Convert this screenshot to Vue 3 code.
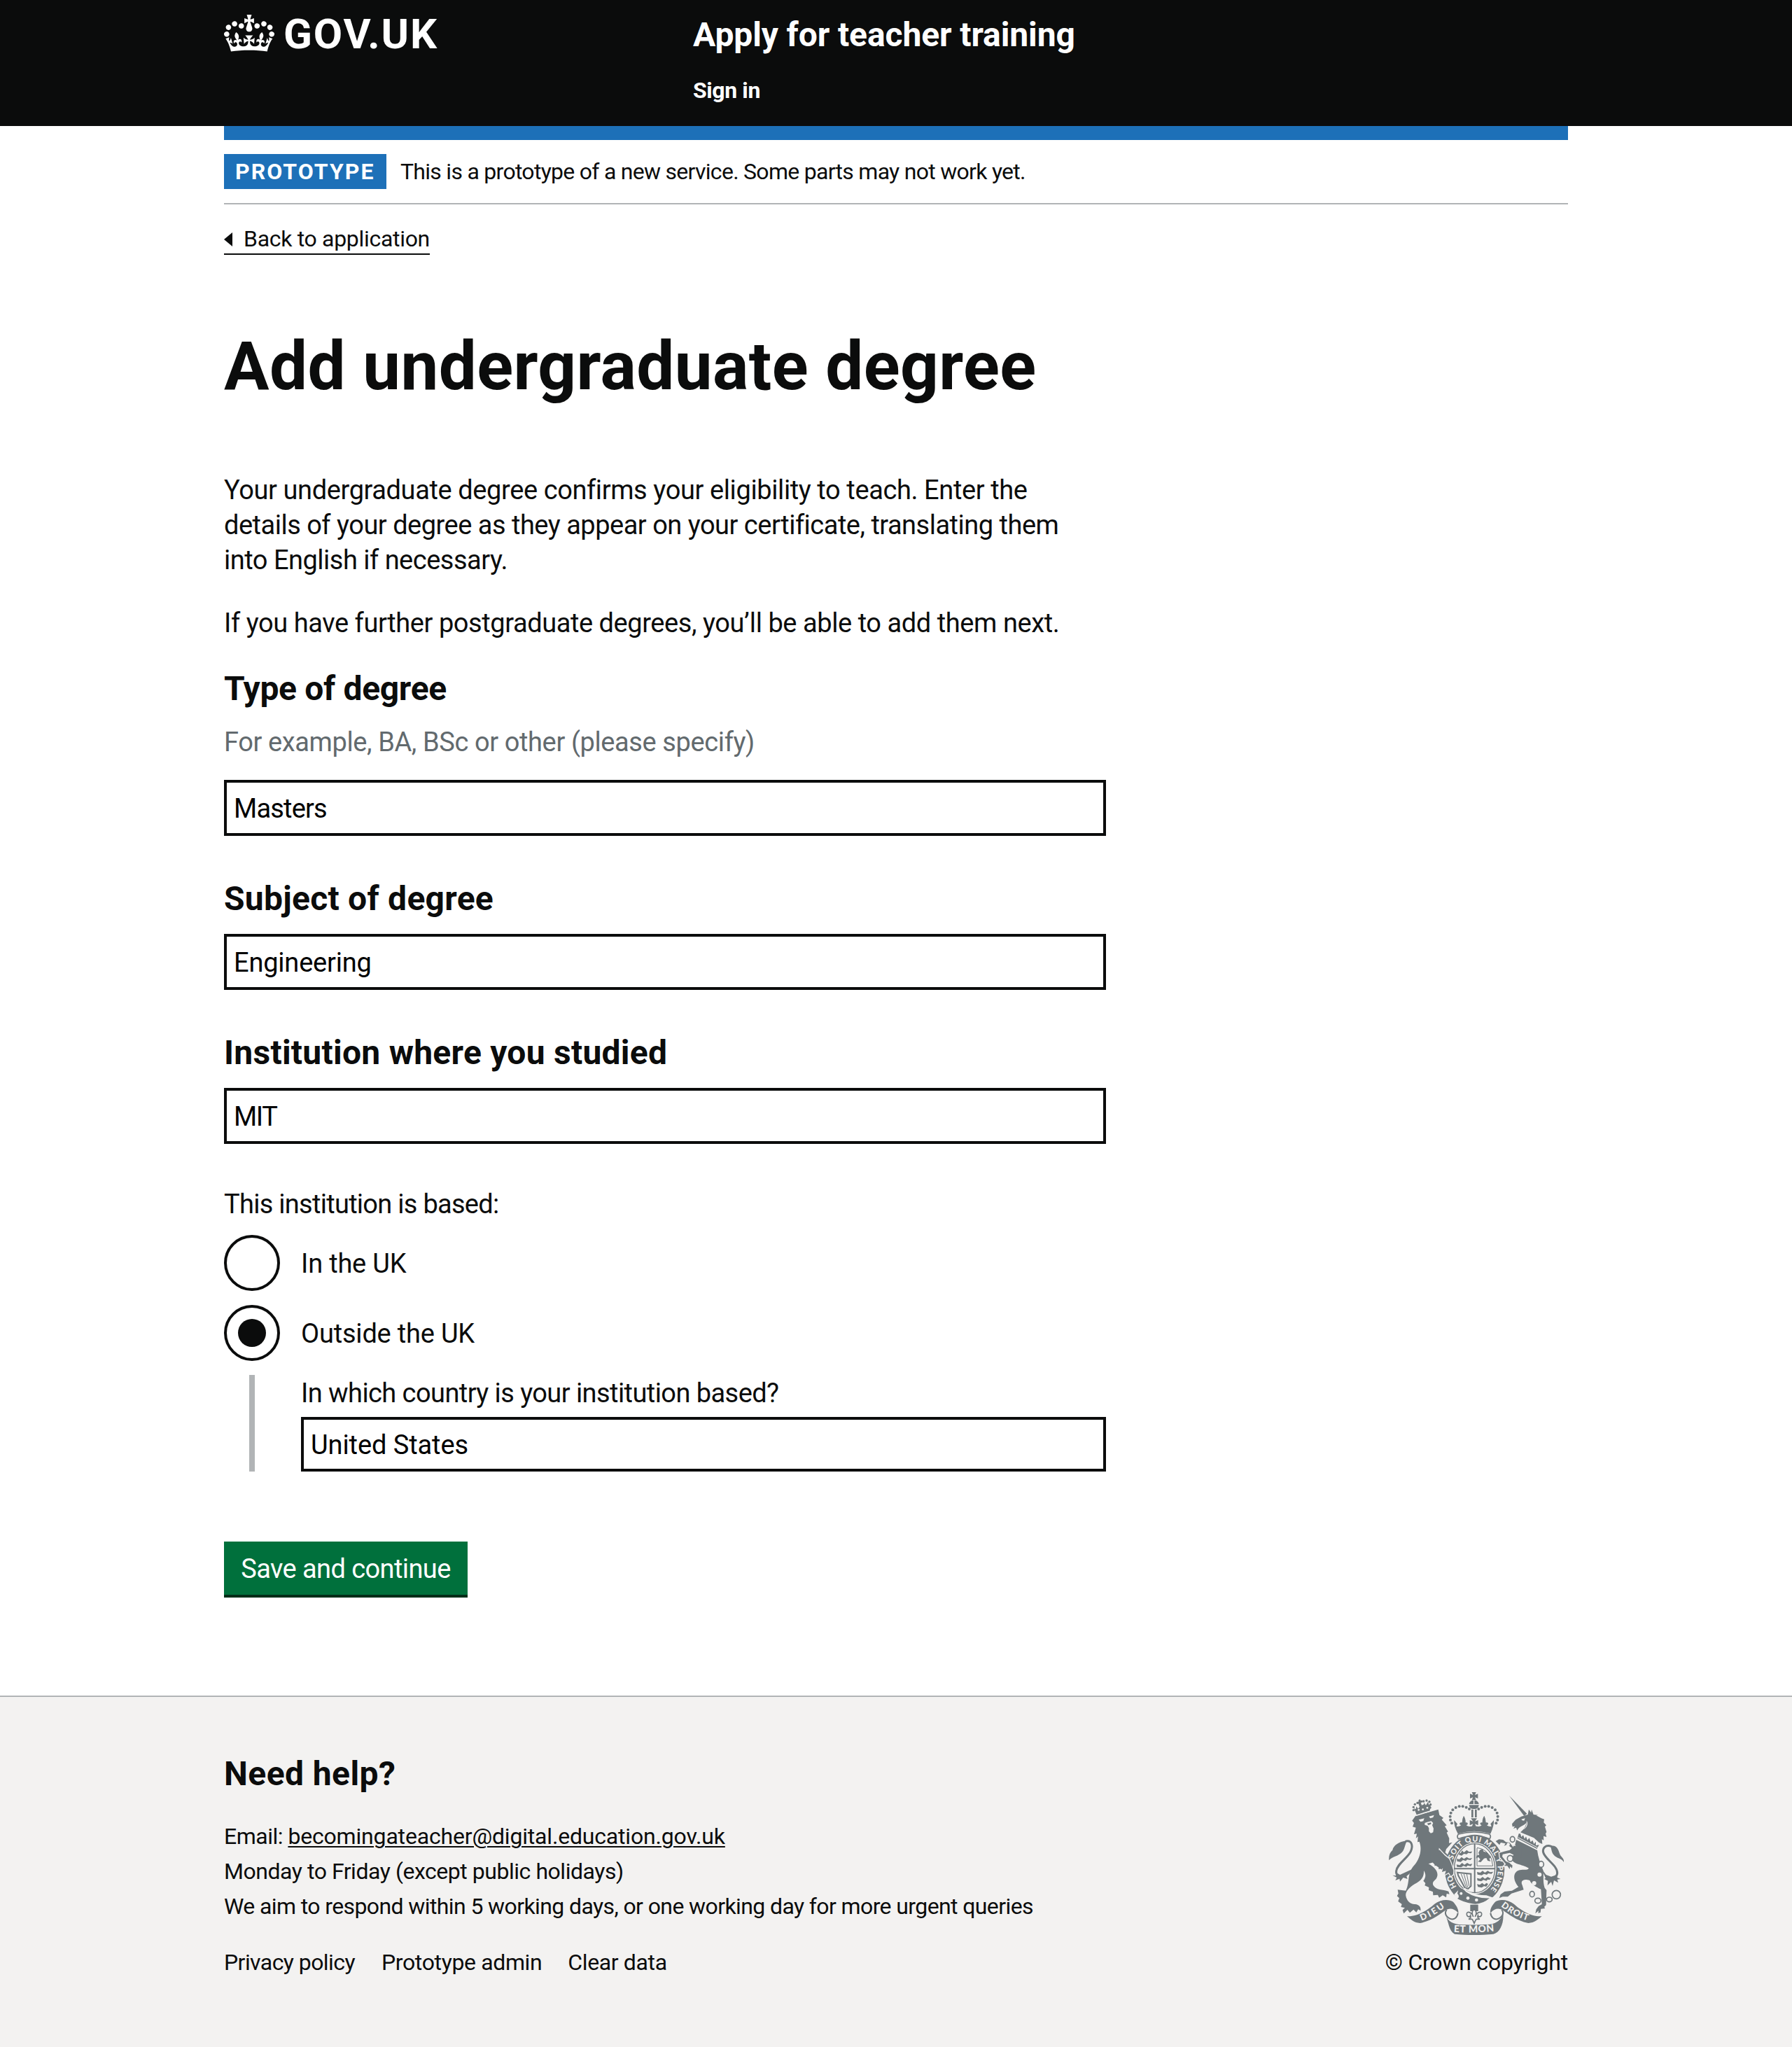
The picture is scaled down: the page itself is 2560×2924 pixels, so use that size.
<script setup>
import { ref } from 'vue'

const degreeType = ref('Masters')
const subject = ref('Engineering')
const institution = ref('MIT')
const location = ref('outside')
const country = ref('United States')

// Pearls on the left arch of the royal crown; the right arch mirrors them.
const pearls = [
  [342, 193], [336, 179], [335, 164], [338, 149], [346, 136], [359, 126], [374, 121], [389, 121], [404, 125], [417, 132]
]
// Rings of the unicorn's chain: centre, radii.
const rings = [
  [602, 262, 10, 12], [592, 344, 12, 13], [725, 369, 11, 13], [686, 497, 10, 12],
  [711, 525, 13, 11], [760, 520, 12, 10], [790, 499, 18, 18]
]
</script>

<template>
  <div class="page">
    <header class="header">
      <div class="container header-row">
        <a class="logo">
          <svg class="logo-crown" viewBox="0 0 132 97" width="72" height="53" aria-hidden="true">
            <path fill="#fff" fill-rule="evenodd" d="M25 30.2c3.5 1.5 7.7-.2 9.1-3.7 1.5-3.6-.2-7.8-3.9-9.2-3.6-1.4-7.6.3-9.1 3.9-1.4 3.5.3 7.5 3.9 9zM9 39.5c3.6 1.5 7.8-.2 9.2-3.7 1.5-3.6-.2-7.8-3.9-9.1-3.6-1.5-7.6.2-9.1 3.8-1.4 3.5.3 7.5 3.8 9zM4.4 57.2c3.5 1.5 7.7-.2 9.1-3.8 1.5-3.6-.2-7.7-3.9-9.1-3.5-1.5-7.6.3-9.1 3.8-1.4 3.5.3 7.6 3.9 9.1zm38.3-21.4c3.5 1.5 7.7-.2 9.1-3.8 1.5-3.6-.2-7.7-3.9-9.1-3.6-1.5-7.6.3-9.1 3.8-1.3 3.6.4 7.7 3.9 9.1zm64.4-5.6c-3.6 1.5-7.8-.2-9.1-3.7-1.5-3.6.2-7.8 3.8-9.2 3.6-1.4 7.7.3 9.2 3.9 1.3 3.5-.4 7.5-3.9 9zm15.9 9.3c-3.6 1.5-7.7-.2-9.1-3.7-1.5-3.6.2-7.8 3.7-9.1 3.6-1.5 7.7.2 9.2 3.8 1.5 3.5-.3 7.5-3.8 9zm4.7 17.7c-3.6 1.5-7.8-.2-9.2-3.8-1.5-3.6.2-7.7 3.9-9.1 3.6-1.5 7.7.3 9.2 3.8 1.3 3.5-.4 7.6-3.9 9.1zM89.3 35.8c-3.6 1.5-7.8-.2-9.2-3.8-1.4-3.6.2-7.7 3.9-9.1 3.6-1.5 7.7.3 9.2 3.8 1.4 3.6-.3 7.7-3.9 9.1zM69.7 17.7l8.9 4.7V9.3l-8.9 2.8c-.2-.3-.5-.6-.9-.9L72.4 0H59.6l3.5 11.2c-.3.3-.6.5-.9.9l-8.8-2.8v13.1l8.8-4.7c.3.3.6.7.9.9l-5 15.4v.1c-.2.8-.4 1.6-.4 2.4 0 4.1 3.1 7.5 7 8.1h.2c.3 0 .7.1 1 .1.4 0 .7 0 1-.1h.2c4-.6 7.1-4.1 7.1-8.1 0-.8-.1-1.7-.4-2.4V34l-5.1-15.4c.4-.2.7-.6 1-.9zM66 92.8c16.9 0 32.8 1.1 47.1 3.2 4-16.9 8.9-26.7 14-33.5l-9.6-3.4c1 4.9 1.1 7.2 0 10.2-1.5-1.4-3-4.3-4.2-8.7L108.6 76c2.8-2 5-3.2 7.5-3.3-4.4 9.4-10 11.9-13.6 11.2-4.3-.8-6.3-4.6-5.6-7.9 1-4.7 5.7-5.9 8-.5 4.3-8.7-3-11.4-7.6-8.8 7.1-7.2 7.9-13.5 2.1-21.1-8 6.1-8.1 12.3-4.5 20.8-4.7-5.4-12.1-2.5-9.5 6.2 3.4-5.2 7.9-2 7.2 3.1-.6 4.3-6.4 7.8-13.5 7.2-10.3-.9-10.9-8-11.2-13.8 2.5-.5 7.1 1.8 11 7.3L80.2 60c-4.1 4.4-8 5.3-12.3 5.4 1.4-4.4 8-11.6 8-11.6H55.5s6.4 7.2 7.9 11.6c-4.2-.1-8-1-12.3-5.4l1.4 16.4c3.9-5.5 8.5-7.7 10.9-7.3-.3 5.8-.9 12.8-11.1 13.8-7.2.6-12.9-2.9-13.5-7.2-.7-5 3.8-8.3 7.1-3.1 2.7-8.7-4.6-11.6-9.4-6.2 3.7-8.5 3.6-14.7-4.6-20.8-5.8 7.6-5 13.9 2.2 21.1-4.7-2.6-11.9.1-7.7 8.8 2.3-5.5 7.1-4.2 8.1.5.7 3.3-1.3 7.1-5.7 7.9-3.5.7-9-1.8-13.5-11.2 2.5.1 4.7 1.3 7.5 3.3l-4.7-15.4c-1.2 4.4-2.7 7.2-4.3 8.7-1.1-3-.9-5.3 0-10.2l-9.5 3.4c5 6.9 9.9 16.7 14 33.5 14.8-2.1 30.8-3.2 47.7-3.2z" />
          </svg>
          <span class="logo-text">GOV.UK</span>
        </a>
        <div class="header-content">
          <div class="service-name">Apply for teacher training</div>
          <nav class="header-nav">Sign in</nav>
        </div>
      </div>
    </header>

    <div class="container body">
      <div class="blue-bar"></div>
      <div class="phase">
        <strong class="tag">PROTOTYPE</strong>
        <span class="phase-text">This is a prototype of a new service. Some parts may not work yet.</span>
      </div>
      <a class="back">
        <svg width="12" height="20" viewBox="0 0 12 20" aria-hidden="true"><path d="M0 10 12 0v20z" fill="#0b0c0c" /></svg>
        <span>Back to application</span>
      </a>

      <main class="main">
        <h1 class="title">Add undergraduate degree</h1>
        <p class="para intro">
          <span class="intro-a">Your undergraduate degree confirms your eligibility to teach. Enter the</span><br>
          <span>details of your degree as they appear on your certificate, translating them</span><br>
          <span>into English if necessary.</span>
        </p>
        <p class="para further">If you have further postgraduate degrees, you’ll be able to add them next.</p>

        <div class="group">
          <label class="label-l type-label" for="type">Type of degree</label>
          <span class="hint">For example, BA, BSc or other (please specify)</span>
          <input id="type" v-model="degreeType" class="input masters" type="text">
        </div>
        <div class="group">
          <label class="label-l" for="subject">Subject of degree</label>
          <input id="subject" v-model="subject" class="input engineering" type="text">
        </div>
        <div class="group">
          <label class="label-l" for="institution">Institution where you studied</label>
          <input id="institution" v-model="institution" class="input mit" type="text">
        </div>

        <fieldset class="radios">
          <legend class="legend">This institution is based:</legend>
          <label class="radio">
            <input v-model="location" class="radio-input" type="radio" value="uk">
            <span class="radio-text">In the UK</span>
          </label>
          <label class="radio">
            <input v-model="location" class="radio-input" type="radio" value="outside">
            <span class="radio-text">Outside the UK</span>
          </label>
          <div v-if="location === 'outside'" class="conditional">
            <label class="country-label" for="country">In which country is your institution based?</label>
            <input id="country" v-model="country" class="input country" type="text">
          </div>
        </fieldset>

        <button class="button" type="button">Save and continue</button>
      </main>
    </div>

    <footer class="footer">
      <div class="container footer-row">
        <div class="footer-main">
          <h2 class="help">Need help?</h2>
          <ul class="contact">
            <li class="email">Email: <a class="link">becomingateacher@digital.education.gov.uk</a></li>
            <li class="hours">Monday to Friday (except public holidays)</li>
            <li class="respond">We aim to respond within 5 working days, or one working day for more urgent queries</li>
          </ul>
          <ul class="links">
            <li class="privacy">Privacy policy</li>
            <li>Prototype admin</li>
            <li>Clear data</li>
          </ul>
        </div>
        <div class="copyright">
          <svg class="crest" viewBox="72 60 753 612" width="251" height="204" aria-hidden="true">
            <defs>
              <path id="garter" d="M364 467A99 119 0 1 1 499 486" />
              <path id="motto-left" d="M212 611Q268 590 322 546" />
              <path id="motto-mid" d="M350 659Q438 665 528 655" />
              <path id="motto-right" d="M552 549Q604 592 672 612" />
            </defs>

            <!-- lion -->
            <g class="ink">
              <path d="M172 182 188 160 250 144 284 134 289 158 306 170 299 178 320 202 312 206 326 229 320 233 331 258 330 278 344 275 318 304 314 318 334 338 340 370 348 408 336 418 329 404 312 414 317 397 300 402 304 386 286 390 290 372 268 376 272 358 242 367C268 380 286 402 279 422 274 440 256 440 262 458 276 482 302 474 328 485L332 497 320 495 318 511 303 502 288 512 282 500 262 502 261 487 243 480 244 468 226 460 229 450 220 440C232 424 231 410 222 396 224 428 205 442 184 453 158 468 142 488 145 504 148 524 164 541 184 540 206 542 210 556 208 568L198 562 190 575 178 563 162 577 152 564 136 580 131 565 141 556 124 552 128 540 112 528 117 514 107 505 113 494 110 478 145 482C164 444 148 408 182 372 204 346 216 306 203 272L195 274 197 250 188 258 192 238 180 240 188 212 174 208 180 192Z" />
              <path d="M150 268C112 272 92 290 88 308 76 320 71 332 73 352 90 334 112 336 130 316 140 304 140 288 150 268Z" />
              <path d="M172 390 160 410 148 420 152 432 134 426 120 443 118 431 100 438 106 426 88 416 102 418 106 406 120 414Z" />
              <path d="m200 94 5-4 4 6 7-1 0 9-7 0 4 12 10-4-1-8 9 12 9-15 4 14 8-8-4 34-56 18-12-30 8 4 2-12 8 10 6-8-5-14-6 1-1-9 7 1Z" />
            </g>
            <path class="line" d="M146 270C174 266 175 294 166 314 152 344 108 366 104 398 102 414 112 424 132 418" />
            <g class="pearl">
              <circle cx="178" cy="137" r="5" /><circle cx="178" cy="124" r="5" /><circle cx="184" cy="112" r="5" /><circle cx="195" cy="106" r="5" />
              <circle cx="221" cy="99" r="5" /><circle cx="234" cy="96" r="5" /><circle cx="246" cy="101" r="5" /><circle cx="251" cy="113" r="5" /><circle cx="249" cy="126" r="5" />
            </g>
            <g class="bg">
              <path d="M200 178 224 172 220 184 208 187ZM244 164 266 158 262 168 250 172Z" />
              <path d="M226 192 236 188 254 184 262 192 258 202 264 216 262 232 252 236 244 228 244 214 238 204 226 200Z" />
              <path d="M186 158 255 137 256 141 188 163Z" />
              <circle cx="200" cy="136" r="4" /><circle cx="218" cy="134" r="4" /><circle cx="237" cy="127" r="4" />
            </g>
            <path class="ink" d="M236 194 252 190 254 196 242 202Z" />

            <!-- unicorn -->
            <g class="ink">
              <path d="M588 75 664 152 652 162Z" />
              <path d="M600 196 616 178 640 164 668 156 672 134 682 148 684 134 692 156 712 158 704 160 726 172 738 176 736 190 747 202 741 208 748 230 744 238 748 252 735 248 736 266 728 262 730 282 716 276 694 256 636 232C656 216 658 206 662 190 652 206 634 202 622 224L618 212 606 216 612 206 602 208Z" />
              <path d="M618 264 708 308C712 340 722 366 734 396 736 426 732 444 740 470L748 480 746 544 738 552 742 558 724 560 722 576 712 578 714 568 700 580 704 562 714 548 728 540 724 476C702 466 684 456 676 438 646 428 636 442 644 458L650 478 598 494 582 508 560 508 545 514 551 498 568 486 600 482 628 466C606 440 602 408 626 396 650 388 664 398 672 386 640 366 606 372 598 344L606 318Z" />
              <path d="M764 290C796 284 800 312 806 328 812 340 824 344 822 360 812 342 792 346 778 328 768 314 770 302 764 290Z" />
              <path d="M726 388 746 414 768 422 792 414 794 426 808 432 794 434 798 448 780 438 774 462 768 444 752 460 754 440 738 432 744 428Z" />
            </g>
            <path class="line" d="M768 292C744 284 730 300 734 318 742 348 796 374 794 408 792 424 778 430 764 428" />
            <path class="bg" d="M630 234 720 286 706 308 622 262Z" />
            <path class="ink" d="M629 238 636 238 640 252 648 244 654 260 660 250 666 266 674 256 680 274 688 266 694 282 702 272 702 288 716 286 707 303 623 258Z" />
            <path class="thin-bg" d="M626 254 710 298" />
            <path class="bg" d="M640 176 656 172 652 182 644 181ZM662 182C672 192 664 214 648 220 662 208 664 196 662 182Z" />

            <!-- royal crown -->
            <g class="pearl">
              <circle v-for="(p, i) in pearls" :key="'l' + i" :cx="p[0]" :cy="p[1]" r="6" />
              <circle v-for="(p, i) in pearls" :key="'r' + i" :cx="874 - p[0]" :cy="p[1]" r="6" />
            </g>
            <g class="ink">
              <path d="M428 60h18l-5 12 13-5v20l-13-5 5 11h-18l5-11-13 5V67l13 5Z" />
              <path d="M416 111a21 18 0 0 1 19-17v17Zm23-17a21 18 0 0 1 19 17h-19Z" />
              <path d="M416 115h42q-2 16-16 17h-10q-14-1-16-17Z" />
              <path d="M426 134h8v34h-8zm15 0h8v34h-8z" />
              <path d="M424 172h26l-9 13 14-5v22l-14-6 6 13h-20l6-13-14 6v-22l14 5Z" />
              <path d="M352 180 366 196 362 206Q372 210 382 202L376 198Q374 188 386 190 386 174 393 161 402 174 401 190 412 188 410 198L404 202Q414 210 424 206H450Q462 210 470 202L464 198Q462 188 473 190 472 174 481 161 488 174 488 190 500 188 498 198L492 202Q502 210 512 206L508 196 522 180Q524 202 508 238 438 216 368 238 350 204 352 180Z" />
            </g>
            <path class="band" d="M370 240Q438 222 504 240 512 250 504 260 438 236 370 260 362 250 370 240Z" />

            <!-- garter and shield -->
            <ellipse class="ink" cx="440" cy="391" rx="128" ry="149" />
            <ellipse class="bg" cx="440" cy="386" rx="93" ry="111" />
            <ellipse class="shield" cx="440" cy="386" rx="87" ry="105" />
            <path class="line-s" d="M440 282V490M353 388H527" />
            <g class="charge">
              <path d="m376 318 4 4 6-12 8 8 12-10 10 8 14-2-6 8-12-2-6 6-12-2-10 8-12-4ZM364 344l10 4 10-10 10 8 12-8 10 6 14-2-8 9-14-2-6 6-12-4-10 8-16-3ZM362 370l14 3 10-10 10 8 12-8 10 6 12-2-6 10-14-3-6 6-12-4-10 6-18-2Z" />
              <path d="m450 402 14 3 10-8 10 8 12-8 10 6 14-2-8 9-14-2-6 6-12-4-10 6-18-3ZM450 428l14 3 10-8 10 8 12-8 10 6 4-2-6 9-8-2-6 6-12-4-10 6-16-3ZM450 454l12 3 10-8 10 8 8-8 8 4-8 12-10-2-10 6-16-3Z" />
              <path d="m462 308 12-6 4 12 14 4 12 14 4 0 2 10-8 2 6 12-12-2-6-12-10 2-14 16-12-2 10-10-8-10-10 6 2-12 12-4-4-8Z" />
            </g>
            <path class="line-s" d="M366 404 424 410V462L412 474 398 470 370 418Z" />
            <path class="line-s thin" d="M382 410 404 468M394 411 410 468M406 411 416 462" />
            <path class="line-s thin" d="M450 300V376H518M450 298Q490 302 512 345L518 376" />
            <path class="bg" d="M352 498 372 478 400 470 406 482Q450 502 490 502L520 512 500 545 380 545Z" />
            <path class="ink" d="M370 478Q382 466 396 480L404 488Q446 516 504 514 470 544 430 538 392 532 366 516 378 508 366 494Z" />
            <g class="bg"><circle cx="411" cy="514" r="7" /><circle cx="448" cy="522" r="7" /><circle cx="382" cy="494" r="6" /></g>
            <text class="garter-text"><textPath href="#garter" startOffset="2" textLength="54">HO</textPath></text>
            <text class="garter-text"><textPath href="#garter" startOffset="122" textLength="396">SOIT QUI MAL Y PENSE</textPath></text>

            <!-- lion's foreleg over the garter -->
            <path class="paw" d="M290 308Q308 330 330 346 338 360 349 396L348 412 338 420 329 404 312 414 317 397 300 402 304 386 286 390 284 350Z" />
            <path class="ink" d="M250 300 290 308 310 330 300 392 270 372 250 350Z" />

            <!-- unicorn's forelegs over the garter -->
            <path class="paw" d="M614 288 600 300 580 284 566 290 572 280 552 276 546 286 530 270 544 262 562 264 574 274 590 276 606 296 616 308 610 330 590 320 560 326 558 336 574 356 588 362 602 374 600 386 592 378 590 390 580 376 566 376 574 368 548 338 546 320 566 314 590 308Z" />
            <path class="ink" d="M606 290 640 290 640 340 606 336Z" />
            <g class="bg">
              <ellipse cx="592" cy="344" rx="12" ry="13" /><circle cx="718" cy="413" r="9" /><circle cx="695" cy="450" r="9" /><circle cx="584" cy="284" r="7" /><ellipse cx="725" cy="369" rx="11" ry="13" />
            </g>
            <ellipse v-for="(r, i) in rings" :key="i" class="ring" :cx="r[0]" :cy="r[1]" :rx="r[2]" :ry="r[3]" />

            <!-- plinth flower -->
            <path class="ink" d="M421 542h34v28h-34z" />
            <path class="flower" d="M438 560C424 574 430 584 434 594 428 572 404 568 406 584 408 596 420 596 422 588 426 596 420 602 414 604H428C432 606 434 614 438 622 442 614 444 606 448 604H462C456 602 450 596 454 588 456 596 468 596 470 584 472 568 448 572 442 594 446 584 452 574 438 560Z" />

            <!-- motto ribbon -->
            <path class="ink" d="M150 592C200 594 244 560 268 539 292 520 328 516 348 530 362 546 372 562 370 578 352 558 334 556 318 564 290 582 260 610 206 621 180 620 168 606 150 592Z" />
            <path class="ink" d="M728 592C676 594 632 560 608 539 584 520 546 516 528 530 514 546 504 562 508 578 524 558 542 556 558 564 586 582 616 610 670 621 696 620 710 606 728 592Z" />
            <path class="ink" d="M312 580C322 608 340 624 372 627 420 629 460 629 506 626 536 622 552 608 562 580 566 622 548 662 520 668 470 673 404 673 354 668 328 654 330 616 312 580Z" />
            <path class="ribbon-edge" d="M368 578C366 598 352 606 340 604 318 596 308 580 320 564M508 578C510 598 524 606 536 604 558 596 568 580 556 564" />
            <text class="motto side"><textPath href="#motto-left" textLength="116">DIEU</textPath></text>
            <text class="motto"><textPath href="#motto-mid" textLength="174">ET MON</textPath></text>
            <text class="motto side"><textPath href="#motto-right" textLength="130">DROIT</textPath></text>
          </svg>
          <span class="copy-text">© Crown copyright</span>
        </div>
      </div>
    </footer>
  </div>
</template>

<style>
body {
  margin: 0;
  background: #f3f2f1;
}
</style>

<style scoped>
.page {
  display: flex;
  flex-direction: column;
  min-height: 2924px;
  background: #fff;
  color: #0b0c0c;
  font-family: Roboto, "Liberation Sans", sans-serif;
}
.page * { box-sizing: border-box; }
.container {
  width: 1920px;
  margin: 0 auto;
}
h1, h2, p, ul { margin: 0; padding: 0; }
li { list-style: none; }

/* header */
.header {
  height: 180px;
  background: #0b0c0c;
  color: #fff;
}
.header-row { display: flex; padding-top: 20px; }
.logo { display: flex; width: 670px; }
.logo-crown { margin-top: 1px; }
.logo-text {
  margin: -1px 0 0 13px;
  font-size: 60px;
  line-height: 60px;
  font-weight: 700;
  letter-spacing: 1.92px;
}
.header-content { display: flex; flex-direction: column; gap: 29px; }
.service-name {
  font-size: 48px;
  line-height: 60px;
  font-weight: 700;
  letter-spacing: -0.11px;
}
.header-nav {
  font-size: 32px;
  line-height: 40px;
  font-weight: 700;
  letter-spacing: -0.4px;
}

/* phase banner */
.blue-bar { height: 20px; background: #1d70b8; }
.phase {
  display: flex;
  gap: 20px;
  padding: 20px 0;
  border-bottom: 2px solid #b1b4b6;
  font-size: 32px;
  line-height: 50px;
}
.tag {
  width: 232px;
  padding-left: 16px;
  background: #1d70b8;
  color: #fff;
  font-weight: 700;
  letter-spacing: 2.05px;
}
.phase-text { letter-spacing: -0.72px; }
.back {
  display: flex;
  align-items: center;
  gap: 16px;
  width: 294px;
  height: 43px;
  margin-top: 29px;
  border-bottom: 2px solid #0b0c0c;
  font-size: 32px;
  line-height: 41px;
  letter-spacing: -0.31px;
  white-space: nowrap;
}

/* form */
.main {
  display: flex;
  flex-direction: column;
  align-items: flex-start;
  width: 1260px;
  padding-top: 109px;
}
.title {
  font-size: 96px;
  line-height: 100px;
  font-weight: 700;
  letter-spacing: 0.44px;
}
.para {
  font-size: 38px;
  line-height: 50px;
  letter-spacing: -0.5px;
  white-space: nowrap;
}
.intro { margin-top: 102px; }
.intro-a { letter-spacing: -0.395px; }
.further { margin: 40px 0 39px; letter-spacing: -0.43px; }
.group {
  display: flex;
  flex-direction: column;
  width: 100%;
  margin-bottom: 60px;
}
.label-l {
  margin-bottom: 20px;
  font-size: 48px;
  line-height: 60px;
  font-weight: 700;
  letter-spacing: 0.26px;
}
.type-label { letter-spacing: -0.33px; }
.hint {
  margin-bottom: 29px;
  padding-top: 1px;
  color: #626a6e;
  font-size: 38px;
  line-height: 50px;
  letter-spacing: -0.39px;
}
.input {
  width: 100%;
  height: 80px;
  margin: 0;
  padding: 2px 10px 0;
  border: 4px solid #0b0c0c;
  border-radius: 0;
  background: #fff;
  color: #000;
  font-family: inherit;
  font-size: 38px;
  line-height: 50px;
}
.masters { letter-spacing: -0.8px; }
.engineering { letter-spacing: -0.2px; }
.mit { letter-spacing: -1.4px; }
.radios {
  width: 100%;
  min-width: 0;
  margin: 0;
  padding: 0;
  border: 0;
  font-size: 38px;
  line-height: 50px;
}
.legend {
  margin-bottom: 19px;
  padding: 1px 0 0;
  letter-spacing: -0.72px;
}
.radio {
  display: flex;
  align-items: center;
  gap: 30px;
  height: 80px;
  margin-bottom: 20px;
  letter-spacing: -0.2px;
}
.radio-text { padding-top: 2px; }
.radio-input {
  display: grid;
  place-items: center;
  appearance: none;
  width: 80px;
  height: 80px;
  margin: 0;
  border: 4px solid #0b0c0c;
  border-radius: 50%;
}
.radio-input:checked::before {
  content: "";
  width: 40px;
  height: 40px;
  border-radius: 50%;
  background: #0b0c0c;
}
.conditional {
  display: flex;
  flex-direction: column;
  margin-left: 36px;
  padding-left: 66px;
  border-left: 8px solid #b1b4b6;
}
.country-label {
  margin-bottom: 9px;
  padding-top: 1px;
  letter-spacing: -0.57px;
}
.country { height: 78px; padding-top: 1px; letter-spacing: -0.09px; }
.button {
  width: 348px;
  height: 76px;
  margin: 100px 0 0;
  padding: 2px 0 0;
  border: 0;
  background: #00703c;
  box-shadow: 0 4px 0 #002d18;
  color: #fff;
  font-family: inherit;
  font-size: 38px;
  line-height: 50px;
  letter-spacing: -0.585px;
}

/* footer */
.footer {
  flex: 1;
  margin-top: 144px;
  padding-top: 80px;
  border-top: 2px solid #b1b4b6;
  background: #f3f2f1;
  font-size: 32px;
  line-height: 50px;
}
.footer-row { display: flex; justify-content: space-between; }
.help {
  margin-bottom: 34px;
  font-size: 48px;
  line-height: 60px;
  font-weight: 700;
  letter-spacing: 0.42px;
}
.email { letter-spacing: -0.5px; }
.link {
  letter-spacing: -0.18px;
  text-decoration: underline;
  text-decoration-thickness: 2px;
  text-underline-offset: 3px;
}
.hours { letter-spacing: -0.46px; }
.respond { letter-spacing: -0.606px; }
.links {
  display: flex;
  gap: 37px;
  margin-top: 30px;
  letter-spacing: -0.37px;
}
.privacy { margin-right: 1px; letter-spacing: -0.57px; }
.copyright {
  display: flex;
  flex-direction: column;
  align-items: flex-end;
  padding-top: 56px;
}
.crest { margin: 0 5px 14px 0; }
.copy-text { letter-spacing: -0.22px; }

/* coat of arms */
.ink, .pearl, .charge { fill: #6f777b; }
.bg { fill: #f3f2f1; }
.line { fill: none; stroke: #6f777b; stroke-width: 9; stroke-linecap: round; }
.line-s { fill: none; stroke: #6f777b; stroke-width: 6; }
.thin { stroke-width: 3; }
.thin-bg { fill: none; stroke: #f3f2f1; stroke-width: 3; }
.paw { fill: #6f777b; stroke: #f3f2f1; stroke-width: 8; paint-order: stroke; }
.ring { fill: none; stroke: #6f777b; stroke-width: 5; }
.band { fill: #f3f2f1; stroke: #6f777b; stroke-width: 5; }
.shield { fill: #f3f2f1; stroke: #6f777b; stroke-width: 4; }
.flower { fill: #f3f2f1; stroke: #6f777b; stroke-width: 5; }
.ribbon-edge { fill: none; stroke: #6f777b; stroke-width: 6; }
.garter-text {
  fill: #f3f2f1;
  font: 900 32px Lato, sans-serif;
}
.motto {
  fill: #f3f2f1;
  font: 900 42px Lato, sans-serif;
}
.side { font-size: 38px; }
</style>
